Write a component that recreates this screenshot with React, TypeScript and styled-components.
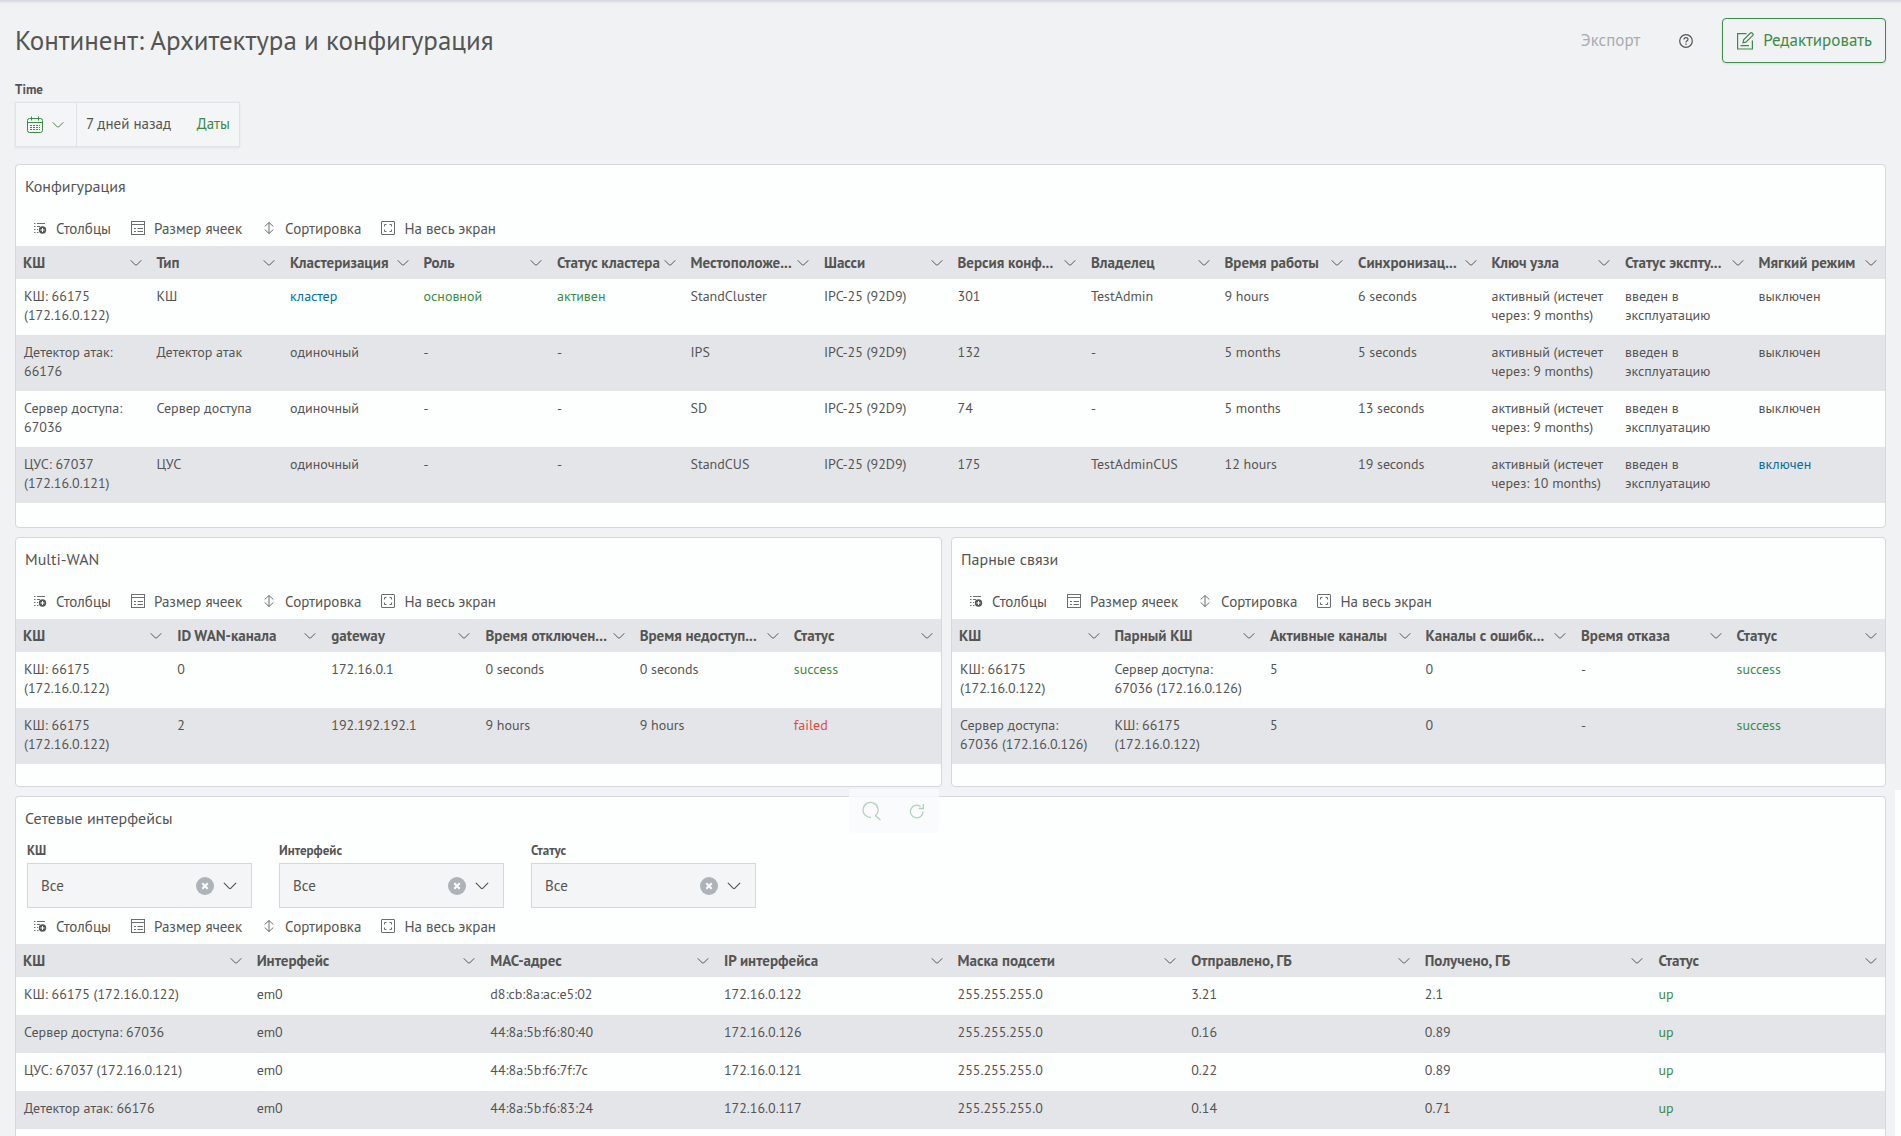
import React from "react";
import styled, { createGlobalStyle } from "styled-components";

const color = {
  page: "#f1f2f4",
  panel: "#fdfefe",
  field: "#f4f5f7",
  line: "#d5d7dd",
  band: "#e4e5e9",
  text: "#555553",
  icon: "#6b6d6e",
  muted: "#a9acb1",
  green: "#3c8b48",
  blue: "#00709f",
  red: "#dc4e41",
};

type Tone = "green" | "blue" | "red";
type Cell = string | { text: string; tone: Tone };

const GlobalStyle = createGlobalStyle`
  *, *::before, *::after { box-sizing: border-box; }
  body {
    margin: 0;
    background: ${color.page};
    color: ${color.text};
    font-family: "PT Sans", "Noto Sans", "Open Sans", sans-serif;
    font-size: 14px;
    line-height: 19px;
  }
  button, select { font: inherit; color: inherit; }
`;

const Page = styled.div`
  position: relative;
  display: flex;
  flex-direction: column;
  height: 100vh;
  padding: 0 15px;
  overflow: hidden;
  background: linear-gradient(#d3d6df, #e4e6ec 2px, ${color.page} 4px);
`;

const ScrollTrack = styled.div`
  position: absolute;
  top: 790px;
  right: 0;
  bottom: 0;
  width: 6px;
  background: ${color.panel};
`;

const Header = styled.header`
  display: flex;
  align-items: center;
  flex: none;
  margin-top: 18px;
`;

const PageTitle = styled.h1`
  flex: 1;
  margin: 0;
  padding-bottom: 2px;
  font-size: 27px;
  line-height: 36px;
  font-weight: 400;
`;

const PlainButton = styled.button`
  display: inline-flex;
  align-items: center;
  justify-content: center;
  padding: 0;
  border: 0;
  background: none;
  cursor: pointer;
`;

const ExportButton = styled(PlainButton)`
  margin-right: 39px;
  color: ${color.muted};
  font-size: 17px;

  &:disabled { cursor: default; }
`;

const HelpButton = styled(PlainButton)`
  margin-right: 29px;
`;

const EditButton = styled(PlainButton)`
  gap: 9px;
  height: 45px;
  padding: 0 13px;
  border: 1px solid ${color.green};
  border-radius: 4px;
  box-shadow: 0 1px 2px #d5dbd8;
  color: ${color.green};
  font-size: 17px;
`;

const Field = styled.div`
  display: flex;
  flex-direction: column;
  gap: 4px;
  width: 225px;
`;

const FieldLabel = styled.label`
  padding-top: 1px;
  font-size: 13px;
  line-height: 16px;
  font-weight: 700;
`;

const TimeFilter = styled(Field)`
  flex: none;
  margin: 18px 0 17px;
`;

const TimePicker = styled.div`
  display: flex;
  height: 45px;
  border: 1px solid #e0e2e6;
  background: ${color.field};
  box-shadow: 0 1px 2px #e0e2e6;
  font-size: 15px;
`;

const PresetButton = styled(PlainButton)`
  gap: 8px;
  width: 61px;
  padding-right: 2px;
  border-right: 1px solid #e0e2e6;
  color: ${color.green};
`;

const RangeButton = styled(PlainButton)`
  flex: 1;
  justify-content: flex-start;
  padding: 0 0 2px 9px;
`;

const DatesLink = styled.a`
  align-self: center;
  padding: 0 9px 2px 0;
  color: ${color.green};
  text-decoration: none;
`;

const Panel = styled.section<{ $space?: number; $fill?: boolean }>`
  position: relative;
  flex: ${(p) => (p.$fill ? "1 0 auto" : "none")};
  min-width: 0;
  padding-bottom: ${(p) => p.$space ?? 0}px;
  border: 1px solid ${color.line};
  border-bottom-width: ${(p) => (p.$fill ? 0 : 1)}px;
  border-radius: ${(p) => (p.$fill ? "4px 4px 0 0" : "4px")};
  background: ${color.panel};
`;

const PanelTitle = styled.h2`
  margin: 0;
  padding: 11px 9px 14px;
  font-size: 16px;
  line-height: 20px;
  font-weight: 400;
`;

const Pair = styled.div`
  display: grid;
  flex: none;
  grid-template-columns: 927fr 935fr;
  gap: 9px;
  margin: 9px 0;
`;

const Toolbar = styled.div`
  display: flex;
  align-items: center;
  height: 36px;
  padding-left: 7px;
  font-size: 15px;
`;

const ToolButton = styled(PlainButton)`
  gap: 9px;
  padding: 0 10px;

  svg { color: ${color.icon}; }
`;

const Filters = styled.div`
  display: flex;
  gap: 27px;
  padding-left: 11px;
`;

const SelectBox = styled.div`
  display: flex;
  align-items: center;
  gap: 9px;
  height: 45px;
  padding: 0 14px 0 13px;
  border: 1px solid ${color.line};
  background: ${color.field};
  font-size: 15px;
`;

const Select = styled.select`
  flex: 1;
  min-width: 0;
  height: 100%;
  padding: 0;
  border: 0;
  background: none;
  appearance: none;
`;

const Table = styled.table`
  width: 100%;
  table-layout: fixed;
  border-collapse: collapse;
`;

const HeadRow = styled.tr`
  height: 33px;
  background: ${color.band};
`;

const HeadCell = styled.th`
  padding: 0 8px 0 7px;
  text-align: left;
`;

const HeadContent = styled.div`
  display: flex;
  align-items: center;
  justify-content: space-between;
  font-size: 15px;
  font-weight: 700;
  white-space: nowrap;
`;

const BodyRow = styled.tr`
  &:nth-child(even) { background: ${color.band}; }
`;

const BodyCell = styled.td<{ $tone?: Tone }>`
  height: 38px;
  padding: 8px 14px 10px 7px;
  vertical-align: top;
  color: ${(p) => (p.$tone ? color[p.$tone] : "inherit")};

  &:first-child { padding-left: 8px; }
`;

const HoverTools = styled.div`
  position: absolute;
  z-index: 1;
  right: 2px;
  bottom: -47px;
  display: grid;
  grid-template-columns: 1fr 1fr;
  width: 90px;
  height: 44px;
  border-radius: 3px;
  background: rgba(249, 250, 252, 0.8);
  color: #b4d2ba;
`;

const Chevron = ({ size = 12 }: { size?: number }) => (
  <svg width={size} height={size} viewBox="0 0 12 12" fill="none" stroke="currentColor" strokeLinecap="round">
    <path d="M1 3.6 5.4 8Q6 8.5 6.6 8L11 3.6" />
  </svg>
);

const CalendarIcon = () => (
  <svg width="18" height="18" viewBox="0 0 18 18" fill="none" stroke="currentColor">
    <rect x="1.5" y="2.5" width="15" height="14" rx="2" />
    <path d="M1.5 6.5h15M5.5.5v4M12.5.5v4" />
    <path d="M4 9.5h10M4 11.5h10M4 13.5h10" strokeDasharray="2 1" />
  </svg>
);

const EditIcon = () => (
  <svg width="18" height="18" viewBox="0 0 18 18" fill="none" stroke="currentColor" strokeWidth="1.2">
    <path d="M10.5 1.6H1.6V17h14.8V8.5M4.5 13.7h8.5" />
    <path d="M7 10.8 7.6 7.9 14.5 1Q15.3.4 16 1l.9.9Q17.5 2.6 16.8 3.4L9.9 10.2Z" />
  </svg>
);

const HelpIcon = () => (
  <svg width="14" height="14" viewBox="0 0 14 14" fill="none" stroke="currentColor" strokeWidth="1.2">
    <circle cx="7" cy="7" r="6.3" />
    <path d="M5 5.5C5 3 9 3 9 5.4 9 6.9 7 6.8 7 8.5M7 9.6v1.3" />
  </svg>
);

const ColumnsIcon = () => (
  <svg width="14" height="14" viewBox="0 0 14 14" fill="none" stroke="currentColor">
    <path d="M1 2.5h1.5M4 2.5H12M1 5.5h1.5M4 5.5H7M1 8.5h1.5M4 8.5H5M1 11.5h1.5M4 11.5H5.5" />
    <circle cx="9.5" cy="9" r="3.7" fill={color.text} stroke="none" />
    <path d="M9.5 7v4M7.5 9h4" stroke={color.panel} />
  </svg>
);

const CellSizeIcon = () => (
  <svg width="14" height="14" viewBox="0 0 14 14" fill="none" stroke="currentColor">
    <rect x=".5" y=".5" width="13" height="13" />
    <path d="M.5 3.5h13M3 7.5h2M6.5 7.5H12M3 10.5h2M6.5 10.5H12" />
  </svg>
);

const SortIcon = () => (
  <svg width="14" height="14" viewBox="0 0 14 14" fill="none" stroke="currentColor" strokeLinecap="round" strokeLinejoin="round">
    <path d="M7 2v10M3 5.2 7 1.5l4 3.7M3 8.8 7 12.5l4-3.7" />
  </svg>
);

const FullscreenIcon = () => (
  <svg width="14" height="14" viewBox="0 0 14 14" fill="none" stroke="currentColor">
    <rect x=".5" y=".5" width="13" height="13" rx=".5" />
    <path d="M3.5 5.5V3.5h2M8.5 3.5h2v2M10.5 8.5v2h-2M5.5 10.5h-2v-2" />
  </svg>
);

const ClearIcon = () => (
  <svg width="18" height="18" viewBox="0 0 18 18">
    <circle cx="9" cy="9" r="9" fill="#adb3b9" />
    <path d="m6.3 6.3 5.4 5.4M11.7 6.3l-5.4 5.4" stroke="#fff" strokeWidth="2" />
  </svg>
);

const SearchIcon = () => (
  <svg width="20" height="20" viewBox="0 0 20 20" fill="none" stroke="currentColor" strokeWidth="1.3">
    <path d="M9 16.5A7.5 7.5 0 1 1 14 14.2l-.5.5 5 4.3" />
  </svg>
);

const RefreshIcon = () => (
  <svg width="16" height="16" viewBox="0 0 16 16" fill="none" stroke="currentColor" strokeWidth="1.3">
    <path d="M14 8.5A6.3 6.3 0 1 1 11.6 3.6M14.3 1v4.5H9.8" />
  </svg>
);

const tools = [
  { label: "Столбцы", Icon: ColumnsIcon },
  { label: "Размер ячеек", Icon: CellSizeIcon },
  { label: "Сортировка", Icon: SortIcon },
  { label: "На весь экран", Icon: FullscreenIcon },
];

const TableTools = () => (
  <Toolbar>
    {tools.map(({ label, Icon }) => (
      <ToolButton key={label} type="button">
        <Icon />
        {label}
      </ToolButton>
    ))}
  </Toolbar>
);

const DataTable = ({ columns, rows }: { columns: string[]; rows: Cell[][] }) => (
  <Table>
    <thead>
      <HeadRow>
        {columns.map((name) => (
          <HeadCell key={name} scope="col">
            <HeadContent>
              <span>{name}</span>
              <PlainButton type="button" aria-label="Меню столбца">
                <Chevron />
              </PlainButton>
            </HeadContent>
          </HeadCell>
        ))}
      </HeadRow>
    </thead>
    <tbody>
      {rows.map((row, r) => (
        <BodyRow key={r}>
          {row.map((cell, c) =>
            typeof cell === "string" ? (
              <BodyCell key={c}>{cell}</BodyCell>
            ) : (
              <BodyCell key={c} $tone={cell.tone}>{cell.text}</BodyCell>
            )
          )}
        </BodyRow>
      ))}
    </tbody>
  </Table>
);

const green = (text: string): Cell => ({ text, tone: "green" });
const blue = (text: string): Cell => ({ text, tone: "blue" });
const red = (text: string): Cell => ({ text, tone: "red" });

const configColumns = [
  "КШ", "Тип", "Кластеризация", "Роль", "Статус кластера", "Местоположе...", "Шасси",
  "Версия конф...", "Владелец", "Время работы", "Синхронизац...", "Ключ узла",
  "Статус экспту...", "Мягкий режим",
];
const configRows: Cell[][] = [
  ["КШ: 66175 (172.16.0.122)", "КШ", blue("кластер"), green("основной"), green("активен"), "StandCluster", "IPC-25 (92D9)", "301", "TestAdmin", "9 hours", "6 seconds", "активный (истечет через: 9 months)", "введен в эксплуатацию", "выключен"],
  ["Детектор атак: 66176", "Детектор атак", "одиночный", "-", "-", "IPS", "IPC-25 (92D9)", "132", "-", "5 months", "5 seconds", "активный (истечет через: 9 months)", "введен в эксплуатацию", "выключен"],
  ["Сервер доступа: 67036", "Сервер доступа", "одиночный", "-", "-", "SD", "IPC-25 (92D9)", "74", "-", "5 months", "13 seconds", "активный (истечет через: 9 months)", "введен в эксплуатацию", "выключен"],
  ["ЦУС: 67037 (172.16.0.121)", "ЦУС", "одиночный", "-", "-", "StandCUS", "IPC-25 (92D9)", "175", "TestAdminCUS", "12 hours", "19 seconds", "активный (истечет через: 10 months)", "введен в эксплуатацию", blue("включен")],
];

const wanColumns = ["КШ", "ID WAN-канала", "gateway", "Время отключен...", "Время недоступ...", "Статус"];
const wanRows: Cell[][] = [
  ["КШ: 66175 (172.16.0.122)", "0", "172.16.0.1", "0 seconds", "0 seconds", green("success")],
  ["КШ: 66175 (172.16.0.122)", "2", "192.192.192.1", "9 hours", "9 hours", red("failed")],
];

const linkColumns = ["КШ", "Парный КШ", "Активные каналы", "Каналы с ошибк...", "Время отказа", "Статус"];
const linkRows: Cell[][] = [
  ["КШ: 66175 (172.16.0.122)", "Сервер доступа: 67036 (172.16.0.126)", "5", "0", "-", green("success")],
  ["Сервер доступа: 67036 (172.16.0.126)", "КШ: 66175 (172.16.0.122)", "5", "0", "-", green("success")],
];

const netColumns = ["КШ", "Интерфейс", "МАС-адрес", "IP интерфейса", "Маска подсети", "Отправлено, ГБ", "Получено, ГБ", "Статус"];
const netRows: Cell[][] = [
  ["КШ: 66175 (172.16.0.122)", "em0", "d8:cb:8a:ac:e5:02", "172.16.0.122", "255.255.255.0", "3.21", "2.1", green("up")],
  ["Сервер доступа: 67036", "em0", "44:8a:5b:f6:80:40", "172.16.0.126", "255.255.255.0", "0.16", "0.89", green("up")],
  ["ЦУС: 67037 (172.16.0.121)", "em0", "44:8a:5b:f6:7f:7c", "172.16.0.121", "255.255.255.0", "0.22", "0.89", green("up")],
  ["Детектор атак: 66176", "em0", "44:8a:5b:f6:83:24", "172.16.0.117", "255.255.255.0", "0.14", "0.71", green("up")],
];

const filters = [
  { id: "node", label: "КШ" },
  { id: "iface", label: "Интерфейс" },
  { id: "status", label: "Статус" },
];

export default function App() {
  return (
    <>
      <GlobalStyle />
      <Page>
        <Header>
          <PageTitle>Континент: Архитектура и конфигурация</PageTitle>
          <ExportButton type="button" disabled>Экспорт</ExportButton>
          <HelpButton type="button" aria-label="Справка"><HelpIcon /></HelpButton>
          <EditButton type="button"><EditIcon />Редактировать</EditButton>
        </Header>

        <TimeFilter>
          <FieldLabel htmlFor="time">Time</FieldLabel>
          <TimePicker>
            <PresetButton type="button" aria-label="Готовые интервалы">
              <CalendarIcon />
              <Chevron />
            </PresetButton>
            <RangeButton id="time" type="button">7 дней назад</RangeButton>
            <DatesLink href="#dates">Даты</DatesLink>
          </TimePicker>
        </TimeFilter>

        <Panel $space={24}>
          <PanelTitle>Конфигурация</PanelTitle>
          <TableTools />
          <DataTable columns={configColumns} rows={configRows} />
        </Panel>

        <Pair>
          <Panel $space={22}>
            <PanelTitle>Multi-WAN</PanelTitle>
            <TableTools />
            <DataTable columns={wanColumns} rows={wanRows} />
            <HoverTools>
              <PlainButton type="button" aria-label="Открыть в поиске"><SearchIcon /></PlainButton>
              <PlainButton type="button" aria-label="Обновить"><RefreshIcon /></PlainButton>
            </HoverTools>
          </Panel>
          <Panel $space={22}>
            <PanelTitle>Парные связи</PanelTitle>
            <TableTools />
            <DataTable columns={linkColumns} rows={linkRows} />
          </Panel>
        </Pair>

        <Panel $fill>
          <PanelTitle>Сетевые интерфейсы</PanelTitle>
          <Filters>
            {filters.map(({ id, label }) => (
              <Field key={id}>
                <FieldLabel htmlFor={id}>{label}</FieldLabel>
                <SelectBox>
                  <Select id={id} defaultValue="all">
                    <option value="all">Все</option>
                  </Select>
                  <PlainButton type="button" aria-label="Очистить"><ClearIcon /></PlainButton>
                  <Chevron size={14} />
                </SelectBox>
              </Field>
            ))}
          </Filters>
          <TableTools />
          <DataTable columns={netColumns} rows={netRows} />
        </Panel>
        <ScrollTrack />
      </Page>
    </>
  );
}
